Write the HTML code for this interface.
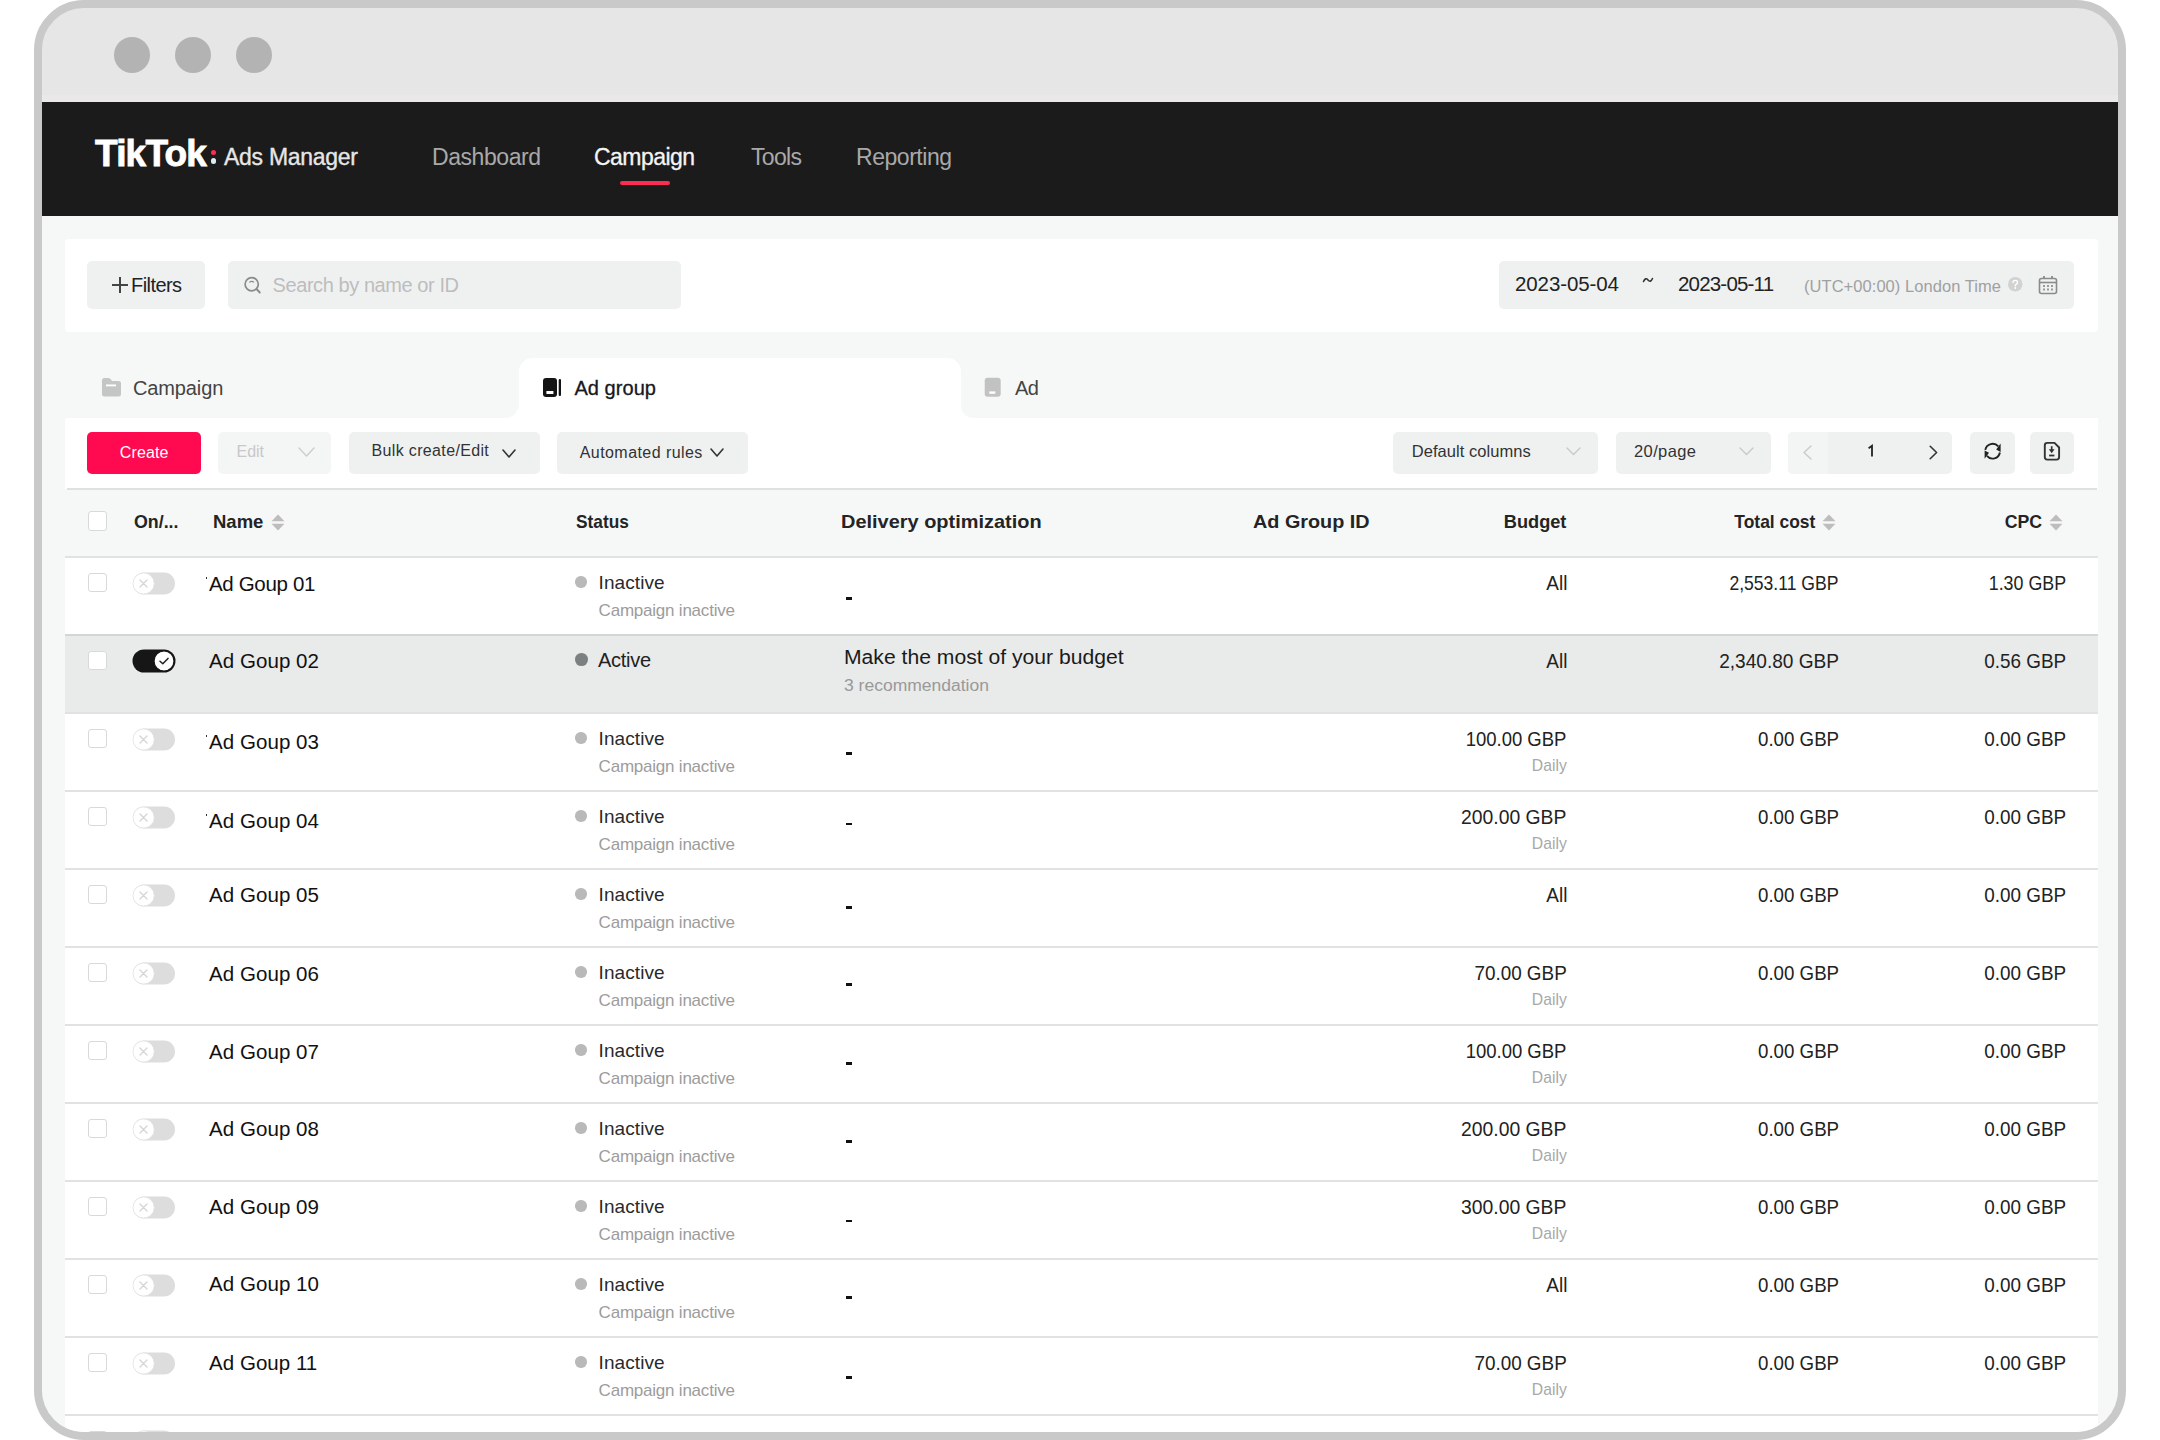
<!DOCTYPE html>
<html><head><meta charset="utf-8"><style>
html,body{margin:0;padding:0;}
body{width:2160px;height:1440px;overflow:hidden;background:#ffffff;position:relative;font-family:"Liberation Sans",sans-serif;}
#frame{position:absolute;left:34px;top:0px;width:2092px;height:1440px;box-sizing:border-box;border:8px solid #c9c9c9;border-radius:50px;background:#e6e6e6;}
#clip{position:absolute;left:42px;top:8px;width:2076px;height:1424px;overflow:hidden;border-radius:42px;}
#inner{position:absolute;left:-42px;top:-8px;width:2160px;height:1440px;}
.t{position:absolute;white-space:nowrap;line-height:1;}
.b{position:absolute;}
.s{position:absolute;overflow:visible;}
</style></head><body>
<div id="frame">
<div class="b" style="left:72px;top:29px;width:36px;height:36px;background:#b3b3b3;border-radius:50%;"></div>
<div class="b" style="left:133px;top:29px;width:36px;height:36px;background:#b3b3b3;border-radius:50%;"></div>
<div class="b" style="left:194px;top:29px;width:36px;height:36px;background:#b3b3b3;border-radius:50%;"></div>
</div>
<div id="clip"><div id="inner">
<div class="b" style="left:42px;top:95px;width:2077px;height:7px;background:#eae8e8;border-radius:0;"></div>
<div class="b" style="left:42px;top:102px;width:2077px;height:114px;background:#1c1b1b;border-radius:0;"></div>
<div class="b" style="left:42px;top:216px;width:2077px;height:1216px;background:#f6f8f8;border-radius:0;"></div>
<div class="t" style="left:95.0px;top:135.1px;font-size:37px;color:#ffffff;font-weight:700;letter-spacing:-0.80px;-webkit-text-stroke:0.9px #fff;">TikTok</div>
<div class="b" style="left:210.8px;top:149.8px;width:5.6px;height:5.6px;background:#fe2c55;border-radius:50%;"></div>
<div class="b" style="left:210.8px;top:158.2px;width:5.6px;height:5.6px;background:#d8eef0;border-radius:50%;"></div>
<div class="t" style="left:224.0px;top:145.9px;font-size:23px;color:#e6e6e6;font-weight:400;letter-spacing:-0.28px;-webkit-text-stroke:0.35px #e6e6e6;">Ads Manager</div>
<div class="t" style="left:432.0px;top:145.8px;font-size:23px;color:#a9a9a9;font-weight:400;letter-spacing:-0.43px;">Dashboard</div>
<div class="t" style="left:594.0px;top:145.8px;font-size:23px;color:#f4f4f4;font-weight:400;letter-spacing:-0.55px;-webkit-text-stroke:0.3px #f4f4f4;">Campaign</div>
<div class="b" style="left:620px;top:181px;width:50px;height:4px;background:#fe2c55;border-radius:2px;"></div>
<div class="t" style="left:751.0px;top:145.8px;font-size:23px;color:#a9a9a9;font-weight:400;letter-spacing:-0.68px;">Tools</div>
<div class="t" style="left:856.0px;top:145.8px;font-size:23px;color:#a9a9a9;font-weight:400;letter-spacing:-0.46px;">Reporting</div>
<div class="b" style="left:65px;top:239px;width:2033px;height:93px;background:#ffffff;border-radius:4px;"></div>
<div class="b" style="left:87px;top:261px;width:118px;height:48px;background:#eff1f1;border-radius:5px;"></div>
<div class="b" style="left:111.6px;top:283.7px;width:16.2px;height:2px;background:#444;border-radius:0;"></div>
<div class="b" style="left:118.9px;top:276.8px;width:2px;height:16px;background:#444;border-radius:0;"></div>
<div class="t" style="left:131.0px;top:275.3px;font-size:20px;color:#222222;font-weight:400;letter-spacing:-0.57px;">Filters</div>
<div class="b" style="left:228px;top:261px;width:453px;height:48px;background:#eff1f1;border-radius:5px;"></div>
<svg class="s" style="left:242px;top:274px" width="22" height="22" viewBox="0 0 22 22"><circle cx="9.7" cy="10.2" r="6.6" fill="none" stroke="#8a8a8a" stroke-width="1.7"/><path d="M7.3 8.4 Q9.7 6.4 12.1 8.4" fill="none" stroke="#8a8a8a" stroke-width="1.2"/><line x1="14.5" y1="15" x2="17.8" y2="18.5" stroke="#8a8a8a" stroke-width="1.9" stroke-linecap="round"/></svg>
<div class="t" style="left:272.6px;top:275.0px;font-size:20px;color:#bdbdbd;font-weight:400;letter-spacing:-0.43px;">Search by name or ID</div>
<div class="b" style="left:1499px;top:261px;width:575px;height:48px;background:#eff1f1;border-radius:5px;"></div>
<div class="t" style="left:1515.0px;top:274.2px;font-size:20.5px;color:#222222;font-weight:400;letter-spacing:-0.10px;">2023-05-04</div>
<svg class="s" style="left:1642px;top:275px" width="12" height="10" viewBox="0 0 12 10"><path d="M1.5 6.5 Q3.5 2 6 5 Q8.5 8 10.5 3.5" fill="none" stroke="#333" stroke-width="1.6" stroke-linecap="round"/></svg>
<div class="t" style="left:1678.0px;top:274.2px;font-size:20.5px;color:#222222;font-weight:400;letter-spacing:-0.81px;">2023-05-11</div>
<div class="t" style="left:1804.0px;top:277.6px;font-size:16.5px;color:#a0a0a0;font-weight:400;letter-spacing:0.05px;">(UTC+00:00) London Time</div>
<svg class="s" style="left:2008px;top:277.3px" width="14.5" height="14.5" viewBox="0 0 14.5 14.5"><circle cx="7.25" cy="7.25" r="7.25" fill="#d2d2d2"/><path d="M5 5.6 Q5 3.4 7.25 3.4 Q9.5 3.4 9.5 5.4 Q9.5 6.6 8.1 7.3 Q7.25 7.8 7.25 8.8" fill="none" stroke="#fff" stroke-width="1.4" stroke-linecap="round"/><circle cx="7.25" cy="11" r="0.9" fill="#fff"/></svg>
<svg class="s" style="left:2038px;top:275px" width="21" height="20" viewBox="0 0 21 20"><rect x="1.5" y="3.5" width="17" height="15" rx="2" fill="none" stroke="#8a8a8a" stroke-width="1.6"/><line x1="1.5" y1="7.5" x2="18.5" y2="7.5" stroke="#8a8a8a" stroke-width="1.6"/><line x1="6" y1="1" x2="6" y2="4" stroke="#8a8a8a" stroke-width="1.8"/><line x1="14" y1="1" x2="14" y2="4" stroke="#8a8a8a" stroke-width="1.8"/><g fill="#9a9a9a"><rect x="5" y="10" width="2" height="2"/><rect x="9" y="10" width="2" height="2"/><rect x="13" y="10" width="2" height="2"/><rect x="5" y="13.5" width="2" height="2"/><rect x="9" y="13.5" width="2" height="2"/><rect x="13" y="13.5" width="2" height="2"/></g></svg>
<div class="b" style="left:519px;top:358px;width:442px;height:70px;background:#ffffff;border-radius:14px 14px 0 0;"></div>
<div class="b" style="left:505px;top:404px;width:14px;height:14px;background:radial-gradient(circle at 0 0, #f6f8f8 13.5px, #ffffff 14.5px);border-radius:0;"></div>
<div class="b" style="left:961px;top:406px;width:12px;height:12px;background:radial-gradient(circle at 100% 0, #f6f8f8 11.5px, #ffffff 12.5px);border-radius:0;"></div>
<svg class="s" style="left:101px;top:377px" width="21" height="21" viewBox="0 0 21 21"><path d="M1 3.5 Q1 1 3.5 1 H7.5 Q9 1 10 2.5 L11 4 H17.5 Q20 4 20 6.5 V17 Q20 19.5 17.5 19.5 H3.5 Q1 19.5 1 17 Z" fill="#c4c6c6"/><rect x="5" y="7.5" width="10" height="1.8" fill="#fff"/></svg>
<div class="t" style="left:133.0px;top:378.4px;font-size:20px;color:#444444;font-weight:400;letter-spacing:-0.13px;">Campaign</div>
<svg class="s" style="left:542px;top:377px" width="21" height="21" viewBox="0 0 21 21"><rect x="1" y="1" width="14" height="19" rx="3" fill="#141414"/><rect x="4.4" y="14" width="7" height="3" fill="#fff"/><rect x="16.7" y="2" width="2.3" height="17" rx="1.1" fill="#141414"/></svg>
<div class="t" style="left:574.4px;top:378.4px;font-size:20px;color:#161823;font-weight:400;letter-spacing:0.06px;-webkit-text-stroke:0.3px #161823;">Ad group</div>
<svg class="s" style="left:984px;top:377px" width="18" height="21" viewBox="0 0 18 21"><rect x="0.7" y="0.8" width="16" height="19" rx="3" fill="#c2c2c2"/><rect x="5.3" y="14.4" width="6" height="2.4" fill="#fff"/></svg>
<div class="t" style="left:1015.0px;top:378.4px;font-size:20px;color:#444444;font-weight:400;letter-spacing:-0.50px;">Ad</div>
<div class="b" style="left:65px;top:418px;width:2033px;height:71px;background:#ffffff;border-radius:2px 0 0 0;"></div>
<div class="b" style="left:87px;top:431.5px;width:114px;height:42.5px;background:#ff0a50;border-radius:5px;"></div>
<div class="t" style="left:119.8px;top:444.8px;font-size:16px;color:#ffffff;font-weight:400;letter-spacing:0.12px;">Create</div>
<div class="b" style="left:218px;top:431.5px;width:113px;height:42px;background:#f4f5f5;border-radius:5px;"></div>
<div class="t" style="left:236.6px;top:443.9px;font-size:16px;color:#c8c8c8;font-weight:400;letter-spacing:-0.07px;">Edit</div>
<svg class="s" style="left:297px;top:446px" width="19" height="12" viewBox="0 0 19 12"><polyline points="2,2 9.5,10 17,2" fill="none" stroke="#cfcfcf" stroke-width="1.6" stroke-linecap="round" stroke-linejoin="round"/></svg>
<div class="b" style="left:348.5px;top:431.5px;width:191.5px;height:42px;background:#eff1f1;border-radius:5px;"></div>
<div class="t" style="left:371.5px;top:443.4px;font-size:16px;color:#333333;font-weight:400;letter-spacing:0.35px;">Bulk create/Edit</div>
<svg class="s" style="left:501px;top:448px" width="16" height="11" viewBox="0 0 16 11"><polyline points="2,2 8.0,9 14,2" fill="none" stroke="#333" stroke-width="1.6" stroke-linecap="round" stroke-linejoin="round"/></svg>
<div class="b" style="left:557px;top:431.5px;width:191px;height:42px;background:#eff1f1;border-radius:5px;"></div>
<div class="t" style="left:579.7px;top:444.9px;font-size:16px;color:#333333;font-weight:400;letter-spacing:0.44px;">Automated rules</div>
<svg class="s" style="left:709px;top:447px" width="16" height="11" viewBox="0 0 16 11"><polyline points="2,2 8.0,9 14,2" fill="none" stroke="#333" stroke-width="1.6" stroke-linecap="round" stroke-linejoin="round"/></svg>
<div class="b" style="left:1392.7px;top:431.5px;width:205.3px;height:42px;background:#eff1f1;border-radius:5px;"></div>
<div class="t" style="left:1411.7px;top:443.3px;font-size:16.5px;color:#333333;font-weight:400;letter-spacing:0.05px;">Default columns</div>
<svg class="s" style="left:1565px;top:446px" width="17" height="10.5" viewBox="0 0 17 10.5"><polyline points="2,2 8.5,8.5 15,2" fill="none" stroke="#c8c8c8" stroke-width="1.4" stroke-linecap="round" stroke-linejoin="round"/></svg>
<div class="b" style="left:1615.7px;top:431.5px;width:155px;height:42px;background:#eff1f1;border-radius:5px;"></div>
<div class="t" style="left:1634.0px;top:443.3px;font-size:16.5px;color:#333333;font-weight:400;letter-spacing:0.39px;">20/page</div>
<svg class="s" style="left:1738px;top:446px" width="17" height="10.5" viewBox="0 0 17 10.5"><polyline points="2,2 8.5,8.5 15,2" fill="none" stroke="#c8c8c8" stroke-width="1.4" stroke-linecap="round" stroke-linejoin="round"/></svg>
<div class="b" style="left:1788px;top:431.5px;width:164px;height:42px;background:#eff1f1;border-radius:5px;"></div>
<div class="b" style="left:1788px;top:431.5px;width:39.5px;height:42px;background:#f3f4f4;border-radius:5px 0 0 5px;"></div>
<svg class="s" style="left:1801px;top:444px" width="13" height="17" viewBox="0 0 13 17"><polyline points="10,2 3,8.5 10,15" fill="none" stroke="#cccccc" stroke-width="1.6" stroke-linecap="round" stroke-linejoin="round"/></svg>
<svg class="s" style="left:1866px;top:444px" width="10" height="15" viewBox="0 0 10 15"><path d="M2.6 4.2 L6 1.8 V12.5" fill="none" stroke="#222" stroke-width="1.8" stroke-linejoin="miter"/></svg>
<svg class="s" style="left:1927px;top:444px" width="13" height="17" viewBox="0 0 13 17"><polyline points="3.2,2.3 9.6,8.5 3.2,14.7" fill="none" stroke="#333" stroke-width="1.6" stroke-linecap="round" stroke-linejoin="round"/></svg>
<div class="b" style="left:1970.4px;top:431.5px;width:44.6px;height:42px;background:#eff1f1;border-radius:5px;"></div>
<svg class="s" style="left:1975px;top:435px" width="95" height="35" viewBox="0 0 95 35"><path d="M10.31 14.92 A7.4 7.4 0 0 1 23.27 11.44" fill="none" stroke="#222" stroke-width="1.9"/><polygon points="25.6,8.6 25.6,16.9 21.2,14.6" fill="#222"/><path d="M24.89 17.48 A7.4 7.4 0 0 1 11.93 20.96" fill="none" stroke="#222" stroke-width="1.9"/><polygon points="9.6,23.8 9.6,15.5 14,17.8" fill="#222"/></svg>
<div class="b" style="left:2030px;top:431.5px;width:44.3px;height:42px;background:#eff1f1;border-radius:5px;"></div>
<svg class="s" style="left:1975px;top:435px" width="95" height="35" viewBox="0 0 95 35"><path d="M72.3 7.9 H79.5 L84.1 12.5 V22.1 Q84.1 24.6 81.6 24.6 H72.3 Q69.8 24.6 69.8 22.1 V10.4 Q69.8 7.9 72.3 7.9 Z" fill="none" stroke="#333" stroke-width="1.9"/><line x1="76.7" y1="11.2" x2="76.7" y2="15.5" stroke="#333" stroke-width="1.7"/><polygon points="73.8,14.2 79.6,14.2 76.7,18.2" fill="#333"/><rect x="74.1" y="19.6" width="5.3" height="1.8" fill="#333"/></svg>
<div class="b" style="left:67px;top:488px;width:2030px;height:1.5px;background:#dfe1e1;border-radius:0;"></div>
<div class="b" style="left:87.5px;top:511.3px;width:19px;height:19.5px;background:#fff;border-radius:3px;border:1.5px solid #d9d9d9;box-sizing:border-box;"></div>
<div class="t" style="left:133.5px;top:512.4px;font-size:19px;color:#242424;font-weight:700;letter-spacing:0.00px;transform:scaleX(0.9368);transform-origin:0 0;">On/...</div>
<div class="t" style="left:212.6px;top:512.4px;font-size:19px;color:#242424;font-weight:700;letter-spacing:0.00px;transform:scaleX(0.9734);transform-origin:0 0;">Name</div>
<svg class="s" style="left:271px;top:514px" width="14" height="17" viewBox="0 0 14 17"><polygon points="7,0.5 13.5,7.2 0.5,7.2" fill="#bdbdbd"/><polygon points="0.5,9.8 13.5,9.8 7,16.5" fill="#bdbdbd"/></svg>
<div class="t" style="left:575.5px;top:512.4px;font-size:19px;color:#242424;font-weight:700;letter-spacing:0.00px;transform:scaleX(0.9096);transform-origin:0 0;">Status</div>
<div class="t" style="left:841.3px;top:512.4px;font-size:19px;color:#242424;font-weight:700;letter-spacing:0.00px;transform:scaleX(1.0500);transform-origin:0 0;">Delivery optimization</div>
<div class="t" style="left:1253.0px;top:512.4px;font-size:19px;color:#242424;font-weight:700;letter-spacing:0.00px;transform:scaleX(1.0419);transform-origin:0 0;">Ad Group ID</div>
<div class="t" style="left:1501.0px;top:512.4px;font-size:19px;color:#242424;font-weight:700;letter-spacing:0.00px;transform:scaleX(0.9579);transform-origin:100% 0;">Budget</div>
<div class="t" style="left:1726.7px;top:512.4px;font-size:19px;color:#242424;font-weight:700;letter-spacing:0.00px;transform:scaleX(0.9168);transform-origin:100% 0;">Total cost</div>
<svg class="s" style="left:1822px;top:514px" width="14" height="17" viewBox="0 0 14 17"><polygon points="7,0.5 13.5,7.2 0.5,7.2" fill="#bdbdbd"/><polygon points="0.5,9.8 13.5,9.8 7,16.5" fill="#bdbdbd"/></svg>
<div class="t" style="left:2001.9px;top:512.4px;font-size:19px;color:#242424;font-weight:700;letter-spacing:0.00px;transform:scaleX(0.9329);transform-origin:100% 0;">CPC</div>
<svg class="s" style="left:2049px;top:514px" width="14" height="17" viewBox="0 0 14 17"><polygon points="7,0.5 13.5,7.2 0.5,7.2" fill="#bdbdbd"/><polygon points="0.5,9.8 13.5,9.8 7,16.5" fill="#bdbdbd"/></svg>
<div class="b" style="left:65px;top:557px;width:2033px;height:78px;background:#ffffff;border-radius:0;"></div>
<div class="b" style="left:65px;top:556px;width:2033px;height:2px;background:#e1e3e3;border-radius:0;"></div>
<div class="b" style="left:88px;top:572.5px;width:19px;height:19.5px;background:#fff;border-radius:3px;border:1.5px solid #d9d9d9;box-sizing:border-box;"></div>
<svg class="s" style="left:132px;top:572px" width="44" height="23" viewBox="0 0 44 23"><rect x="1" y="0.5" width="42" height="22" rx="11" fill="#dddddd"/><circle cx="11.6" cy="11.5" r="10.6" fill="#fff" stroke="#e2e2e2" stroke-width="0.8"/><path d="M8 8 L15 15 M15 8 L8 15" stroke="#d4d4d4" stroke-width="1.3" stroke-linecap="round"/></svg>
<div class="t" style="left:209.0px;top:574.2px;font-size:20.5px;color:#111111;font-weight:400;letter-spacing:-0.34px;">Ad Goup 01</div>
<div class="b" style="left:205.5px;top:577.1px;width:1.6px;height:2.2px;background:#333;border-radius:0;"></div>
<div class="b" style="left:575.3px;top:576.3px;width:11.4px;height:11.4px;background:#b9b9b9;border-radius:50%;"></div>
<div class="t" style="left:598.6px;top:573.1px;font-size:19px;color:#2a2a2a;font-weight:400;letter-spacing:0.08px;">Inactive</div>
<div class="t" style="left:598.6px;top:601.8px;font-size:17px;color:#9c9c9c;font-weight:400;letter-spacing:-0.22px;">Campaign inactive</div>
<div class="b" style="left:845.5px;top:597px;width:6.2px;height:2.5px;background:#111;border-radius:0;"></div>
<div class="t" style="left:1543.5px;top:571.6px;font-size:21px;color:#222222;font-weight:400;letter-spacing:0.00px;transform:scaleX(0.9009);transform-origin:100% 0;">All</div>
<div class="t" style="left:1708.3px;top:571.6px;font-size:21px;color:#222222;font-weight:400;letter-spacing:0.00px;transform:scaleX(0.8358);transform-origin:100% 0;">2,553.11 GBP</div>
<div class="t" style="left:1975.3px;top:571.6px;font-size:21px;color:#222222;font-weight:400;letter-spacing:0.00px;transform:scaleX(0.8491);transform-origin:100% 0;">1.30 GBP</div>
<div class="b" style="left:65px;top:635px;width:2033px;height:78px;background:#e9eaea;border-radius:0;"></div>
<div class="b" style="left:65px;top:634px;width:2033px;height:2px;background:#d4d6d6;border-radius:0;"></div>
<div class="b" style="left:88px;top:650.5px;width:19px;height:19.5px;background:#fff;border-radius:3px;border:1.5px solid #d9d9d9;box-sizing:border-box;"></div>
<svg class="s" style="left:132px;top:649px" width="44" height="24" viewBox="0 0 44 24"><rect x="0.5" y="0.5" width="43" height="23" rx="11.5" fill="#161616"/><circle cx="32" cy="12" r="10" fill="#fff" stroke="#161616" stroke-width="1.2"/><polyline points="28,12.2 30.8,14.8 36,9.4" fill="none" stroke="#222" stroke-width="1.5" stroke-linecap="round" stroke-linejoin="round"/></svg>
<div class="t" style="left:209.0px;top:651.1px;font-size:20.5px;color:#111111;font-weight:400;letter-spacing:0.06px;">Ad Goup 02</div>
<div class="b" style="left:575px;top:653px;width:12.8px;height:12.8px;background:#7d8080;border-radius:50%;"></div>
<div class="t" style="left:597.9px;top:650.0px;font-size:20px;color:#222222;font-weight:400;letter-spacing:-0.26px;">Active</div>
<div class="t" style="left:844.0px;top:647.7px;font-size:19.5px;color:#1a1a1a;font-weight:400;letter-spacing:0.00px;transform:scaleX(1.0838);transform-origin:0 0;">Make the most of your budget</div>
<div class="t" style="left:844.0px;top:678.1px;font-size:16px;color:#999999;font-weight:400;letter-spacing:0.00px;transform:scaleX(1.0938);transform-origin:0 0;">3 recommendation</div>
<div class="t" style="left:1543.5px;top:649.6px;font-size:21px;color:#222222;font-weight:400;letter-spacing:0.00px;transform:scaleX(0.9009);transform-origin:100% 0;">All</div>
<div class="t" style="left:1706.8px;top:649.6px;font-size:21px;color:#222222;font-weight:400;letter-spacing:0.00px;transform:scaleX(0.9076);transform-origin:100% 0;">2,340.80 GBP</div>
<div class="t" style="left:1975.3px;top:649.6px;font-size:21px;color:#222222;font-weight:400;letter-spacing:0.00px;transform:scaleX(0.8986);transform-origin:100% 0;">0.56 GBP</div>
<div class="b" style="left:65px;top:713px;width:2033px;height:78px;background:#ffffff;border-radius:0;"></div>
<div class="b" style="left:65px;top:712px;width:2033px;height:2px;background:#e1e3e3;border-radius:0;"></div>
<div class="b" style="left:88px;top:728.5px;width:19px;height:19.5px;background:#fff;border-radius:3px;border:1.5px solid #d9d9d9;box-sizing:border-box;"></div>
<svg class="s" style="left:132px;top:728px" width="44" height="23" viewBox="0 0 44 23"><rect x="1" y="0.5" width="42" height="22" rx="11" fill="#dddddd"/><circle cx="11.6" cy="11.5" r="10.6" fill="#fff" stroke="#e2e2e2" stroke-width="0.8"/><path d="M8 8 L15 15 M15 8 L8 15" stroke="#d4d4d4" stroke-width="1.3" stroke-linecap="round"/></svg>
<div class="t" style="left:209.0px;top:731.6px;font-size:20.5px;color:#111111;font-weight:400;letter-spacing:0.06px;">Ad Goup 03</div>
<div class="b" style="left:205.5px;top:734.5px;width:1.6px;height:2.2px;background:#333;border-radius:0;"></div>
<div class="b" style="left:575.3px;top:732.3px;width:11.4px;height:11.4px;background:#b9b9b9;border-radius:50%;"></div>
<div class="t" style="left:598.6px;top:729.1px;font-size:19px;color:#2a2a2a;font-weight:400;letter-spacing:0.08px;">Inactive</div>
<div class="t" style="left:598.6px;top:757.8px;font-size:17px;color:#9c9c9c;font-weight:400;letter-spacing:-0.22px;">Campaign inactive</div>
<div class="b" style="left:845.5px;top:752px;width:6.2px;height:2.5px;background:#111;border-radius:0;"></div>
<div class="t" style="left:1452.4px;top:727.6px;font-size:21px;color:#222222;font-weight:400;letter-spacing:0.00px;transform:scaleX(0.8807);transform-origin:100% 0;">100.00 GBP</div>
<div class="t" style="left:1529.0px;top:757.2px;font-size:17px;color:#a8a8a8;font-weight:400;letter-spacing:0.00px;transform:scaleX(0.9253);transform-origin:100% 0;">Daily</div>
<div class="t" style="left:1747.7px;top:727.6px;font-size:21px;color:#222222;font-weight:400;letter-spacing:0.00px;transform:scaleX(0.8898);transform-origin:100% 0;">0.00 GBP</div>
<div class="t" style="left:1975.3px;top:727.6px;font-size:21px;color:#222222;font-weight:400;letter-spacing:0.00px;transform:scaleX(0.8986);transform-origin:100% 0;">0.00 GBP</div>
<div class="b" style="left:65px;top:791px;width:2033px;height:78px;background:#ffffff;border-radius:0;"></div>
<div class="b" style="left:65px;top:790px;width:2033px;height:2px;background:#e1e3e3;border-radius:0;"></div>
<div class="b" style="left:88px;top:806.5px;width:19px;height:19.5px;background:#fff;border-radius:3px;border:1.5px solid #d9d9d9;box-sizing:border-box;"></div>
<svg class="s" style="left:132px;top:806px" width="44" height="23" viewBox="0 0 44 23"><rect x="1" y="0.5" width="42" height="22" rx="11" fill="#dddddd"/><circle cx="11.6" cy="11.5" r="10.6" fill="#fff" stroke="#e2e2e2" stroke-width="0.8"/><path d="M8 8 L15 15 M15 8 L8 15" stroke="#d4d4d4" stroke-width="1.3" stroke-linecap="round"/></svg>
<div class="t" style="left:209.0px;top:810.9px;font-size:20.5px;color:#111111;font-weight:400;letter-spacing:0.06px;">Ad Goup 04</div>
<div class="b" style="left:205.5px;top:813.8px;width:1.6px;height:2.2px;background:#333;border-radius:0;"></div>
<div class="b" style="left:575.3px;top:810.3px;width:11.4px;height:11.4px;background:#b9b9b9;border-radius:50%;"></div>
<div class="t" style="left:598.6px;top:807.1px;font-size:19px;color:#2a2a2a;font-weight:400;letter-spacing:0.08px;">Inactive</div>
<div class="t" style="left:598.6px;top:835.8px;font-size:17px;color:#9c9c9c;font-weight:400;letter-spacing:-0.22px;">Campaign inactive</div>
<div class="b" style="left:845.5px;top:822.6px;width:6.2px;height:2.5px;background:#111;border-radius:0;"></div>
<div class="t" style="left:1452.4px;top:805.6px;font-size:21px;color:#222222;font-weight:400;letter-spacing:0.00px;transform:scaleX(0.9209);transform-origin:100% 0;">200.00 GBP</div>
<div class="t" style="left:1529.0px;top:835.2px;font-size:17px;color:#a8a8a8;font-weight:400;letter-spacing:0.00px;transform:scaleX(0.9253);transform-origin:100% 0;">Daily</div>
<div class="t" style="left:1747.7px;top:805.6px;font-size:21px;color:#222222;font-weight:400;letter-spacing:0.00px;transform:scaleX(0.8898);transform-origin:100% 0;">0.00 GBP</div>
<div class="t" style="left:1975.3px;top:805.6px;font-size:21px;color:#222222;font-weight:400;letter-spacing:0.00px;transform:scaleX(0.8986);transform-origin:100% 0;">0.00 GBP</div>
<div class="b" style="left:65px;top:869px;width:2033px;height:78px;background:#ffffff;border-radius:0;"></div>
<div class="b" style="left:65px;top:868px;width:2033px;height:2px;background:#e1e3e3;border-radius:0;"></div>
<div class="b" style="left:88px;top:884.5px;width:19px;height:19.5px;background:#fff;border-radius:3px;border:1.5px solid #d9d9d9;box-sizing:border-box;"></div>
<svg class="s" style="left:132px;top:884px" width="44" height="23" viewBox="0 0 44 23"><rect x="1" y="0.5" width="42" height="22" rx="11" fill="#dddddd"/><circle cx="11.6" cy="11.5" r="10.6" fill="#fff" stroke="#e2e2e2" stroke-width="0.8"/><path d="M8 8 L15 15 M15 8 L8 15" stroke="#d4d4d4" stroke-width="1.3" stroke-linecap="round"/></svg>
<div class="t" style="left:209.0px;top:885.1px;font-size:20.5px;color:#111111;font-weight:400;letter-spacing:0.06px;">Ad Goup 05</div>
<div class="b" style="left:575.3px;top:888.3px;width:11.4px;height:11.4px;background:#b9b9b9;border-radius:50%;"></div>
<div class="t" style="left:598.6px;top:885.1px;font-size:19px;color:#2a2a2a;font-weight:400;letter-spacing:0.08px;">Inactive</div>
<div class="t" style="left:598.6px;top:913.8px;font-size:17px;color:#9c9c9c;font-weight:400;letter-spacing:-0.22px;">Campaign inactive</div>
<div class="b" style="left:845.5px;top:906px;width:6.2px;height:2.5px;background:#111;border-radius:0;"></div>
<div class="t" style="left:1543.5px;top:883.6px;font-size:21px;color:#222222;font-weight:400;letter-spacing:0.00px;transform:scaleX(0.9009);transform-origin:100% 0;">All</div>
<div class="t" style="left:1747.7px;top:883.6px;font-size:21px;color:#222222;font-weight:400;letter-spacing:0.00px;transform:scaleX(0.8898);transform-origin:100% 0;">0.00 GBP</div>
<div class="t" style="left:1975.3px;top:883.6px;font-size:21px;color:#222222;font-weight:400;letter-spacing:0.00px;transform:scaleX(0.8986);transform-origin:100% 0;">0.00 GBP</div>
<div class="b" style="left:65px;top:947px;width:2033px;height:78px;background:#ffffff;border-radius:0;"></div>
<div class="b" style="left:65px;top:946px;width:2033px;height:2px;background:#e1e3e3;border-radius:0;"></div>
<div class="b" style="left:88px;top:962.5px;width:19px;height:19.5px;background:#fff;border-radius:3px;border:1.5px solid #d9d9d9;box-sizing:border-box;"></div>
<svg class="s" style="left:132px;top:962px" width="44" height="23" viewBox="0 0 44 23"><rect x="1" y="0.5" width="42" height="22" rx="11" fill="#dddddd"/><circle cx="11.6" cy="11.5" r="10.6" fill="#fff" stroke="#e2e2e2" stroke-width="0.8"/><path d="M8 8 L15 15 M15 8 L8 15" stroke="#d4d4d4" stroke-width="1.3" stroke-linecap="round"/></svg>
<div class="t" style="left:209.0px;top:963.6px;font-size:20.5px;color:#111111;font-weight:400;letter-spacing:0.06px;">Ad Goup 06</div>
<div class="b" style="left:575.3px;top:966.3px;width:11.4px;height:11.4px;background:#b9b9b9;border-radius:50%;"></div>
<div class="t" style="left:598.6px;top:963.1px;font-size:19px;color:#2a2a2a;font-weight:400;letter-spacing:0.08px;">Inactive</div>
<div class="t" style="left:598.6px;top:991.8px;font-size:17px;color:#9c9c9c;font-weight:400;letter-spacing:-0.22px;">Campaign inactive</div>
<div class="b" style="left:845.5px;top:983px;width:6.2px;height:2.5px;background:#111;border-radius:0;"></div>
<div class="t" style="left:1464.1px;top:961.6px;font-size:21px;color:#222222;font-weight:400;letter-spacing:0.00px;transform:scaleX(0.8988);transform-origin:100% 0;">70.00 GBP</div>
<div class="t" style="left:1529.0px;top:991.2px;font-size:17px;color:#a8a8a8;font-weight:400;letter-spacing:0.00px;transform:scaleX(0.9253);transform-origin:100% 0;">Daily</div>
<div class="t" style="left:1747.7px;top:961.6px;font-size:21px;color:#222222;font-weight:400;letter-spacing:0.00px;transform:scaleX(0.8898);transform-origin:100% 0;">0.00 GBP</div>
<div class="t" style="left:1975.3px;top:961.6px;font-size:21px;color:#222222;font-weight:400;letter-spacing:0.00px;transform:scaleX(0.8986);transform-origin:100% 0;">0.00 GBP</div>
<div class="b" style="left:65px;top:1025px;width:2033px;height:78px;background:#ffffff;border-radius:0;"></div>
<div class="b" style="left:65px;top:1024px;width:2033px;height:2px;background:#e1e3e3;border-radius:0;"></div>
<div class="b" style="left:88px;top:1040.5px;width:19px;height:19.5px;background:#fff;border-radius:3px;border:1.5px solid #d9d9d9;box-sizing:border-box;"></div>
<svg class="s" style="left:132px;top:1040px" width="44" height="23" viewBox="0 0 44 23"><rect x="1" y="0.5" width="42" height="22" rx="11" fill="#dddddd"/><circle cx="11.6" cy="11.5" r="10.6" fill="#fff" stroke="#e2e2e2" stroke-width="0.8"/><path d="M8 8 L15 15 M15 8 L8 15" stroke="#d4d4d4" stroke-width="1.3" stroke-linecap="round"/></svg>
<div class="t" style="left:209.0px;top:1042.2px;font-size:20.5px;color:#111111;font-weight:400;letter-spacing:0.06px;">Ad Goup 07</div>
<div class="b" style="left:575.3px;top:1044.3px;width:11.4px;height:11.4px;background:#b9b9b9;border-radius:50%;"></div>
<div class="t" style="left:598.6px;top:1041.1px;font-size:19px;color:#2a2a2a;font-weight:400;letter-spacing:0.08px;">Inactive</div>
<div class="t" style="left:598.6px;top:1069.8px;font-size:17px;color:#9c9c9c;font-weight:400;letter-spacing:-0.22px;">Campaign inactive</div>
<div class="b" style="left:845.5px;top:1062px;width:6.2px;height:2.5px;background:#111;border-radius:0;"></div>
<div class="t" style="left:1452.4px;top:1039.7px;font-size:21px;color:#222222;font-weight:400;letter-spacing:0.00px;transform:scaleX(0.8807);transform-origin:100% 0;">100.00 GBP</div>
<div class="t" style="left:1529.0px;top:1069.2px;font-size:17px;color:#a8a8a8;font-weight:400;letter-spacing:0.00px;transform:scaleX(0.9253);transform-origin:100% 0;">Daily</div>
<div class="t" style="left:1747.7px;top:1039.7px;font-size:21px;color:#222222;font-weight:400;letter-spacing:0.00px;transform:scaleX(0.8898);transform-origin:100% 0;">0.00 GBP</div>
<div class="t" style="left:1975.3px;top:1039.7px;font-size:21px;color:#222222;font-weight:400;letter-spacing:0.00px;transform:scaleX(0.8986);transform-origin:100% 0;">0.00 GBP</div>
<div class="b" style="left:65px;top:1103px;width:2033px;height:78px;background:#ffffff;border-radius:0;"></div>
<div class="b" style="left:65px;top:1102px;width:2033px;height:2px;background:#e1e3e3;border-radius:0;"></div>
<div class="b" style="left:88px;top:1118.5px;width:19px;height:19.5px;background:#fff;border-radius:3px;border:1.5px solid #d9d9d9;box-sizing:border-box;"></div>
<svg class="s" style="left:132px;top:1118px" width="44" height="23" viewBox="0 0 44 23"><rect x="1" y="0.5" width="42" height="22" rx="11" fill="#dddddd"/><circle cx="11.6" cy="11.5" r="10.6" fill="#fff" stroke="#e2e2e2" stroke-width="0.8"/><path d="M8 8 L15 15 M15 8 L8 15" stroke="#d4d4d4" stroke-width="1.3" stroke-linecap="round"/></svg>
<div class="t" style="left:209.0px;top:1119.3px;font-size:20.5px;color:#111111;font-weight:400;letter-spacing:0.06px;">Ad Goup 08</div>
<div class="b" style="left:575.3px;top:1122.3px;width:11.4px;height:11.4px;background:#b9b9b9;border-radius:50%;"></div>
<div class="t" style="left:598.6px;top:1119.1px;font-size:19px;color:#2a2a2a;font-weight:400;letter-spacing:0.08px;">Inactive</div>
<div class="t" style="left:598.6px;top:1147.8px;font-size:17px;color:#9c9c9c;font-weight:400;letter-spacing:-0.22px;">Campaign inactive</div>
<div class="b" style="left:845.5px;top:1140px;width:6.2px;height:2.5px;background:#111;border-radius:0;"></div>
<div class="t" style="left:1452.4px;top:1117.7px;font-size:21px;color:#222222;font-weight:400;letter-spacing:0.00px;transform:scaleX(0.9209);transform-origin:100% 0;">200.00 GBP</div>
<div class="t" style="left:1529.0px;top:1147.2px;font-size:17px;color:#a8a8a8;font-weight:400;letter-spacing:0.00px;transform:scaleX(0.9253);transform-origin:100% 0;">Daily</div>
<div class="t" style="left:1747.7px;top:1117.7px;font-size:21px;color:#222222;font-weight:400;letter-spacing:0.00px;transform:scaleX(0.8898);transform-origin:100% 0;">0.00 GBP</div>
<div class="t" style="left:1975.3px;top:1117.7px;font-size:21px;color:#222222;font-weight:400;letter-spacing:0.00px;transform:scaleX(0.8986);transform-origin:100% 0;">0.00 GBP</div>
<div class="b" style="left:65px;top:1181px;width:2033px;height:78px;background:#ffffff;border-radius:0;"></div>
<div class="b" style="left:65px;top:1180px;width:2033px;height:2px;background:#e1e3e3;border-radius:0;"></div>
<div class="b" style="left:88px;top:1196.5px;width:19px;height:19.5px;background:#fff;border-radius:3px;border:1.5px solid #d9d9d9;box-sizing:border-box;"></div>
<svg class="s" style="left:132px;top:1196px" width="44" height="23" viewBox="0 0 44 23"><rect x="1" y="0.5" width="42" height="22" rx="11" fill="#dddddd"/><circle cx="11.6" cy="11.5" r="10.6" fill="#fff" stroke="#e2e2e2" stroke-width="0.8"/><path d="M8 8 L15 15 M15 8 L8 15" stroke="#d4d4d4" stroke-width="1.3" stroke-linecap="round"/></svg>
<div class="t" style="left:209.0px;top:1197.2px;font-size:20.5px;color:#111111;font-weight:400;letter-spacing:0.06px;">Ad Goup 09</div>
<div class="b" style="left:575.3px;top:1200.3px;width:11.4px;height:11.4px;background:#b9b9b9;border-radius:50%;"></div>
<div class="t" style="left:598.6px;top:1197.1px;font-size:19px;color:#2a2a2a;font-weight:400;letter-spacing:0.08px;">Inactive</div>
<div class="t" style="left:598.6px;top:1225.8px;font-size:17px;color:#9c9c9c;font-weight:400;letter-spacing:-0.22px;">Campaign inactive</div>
<div class="b" style="left:845.5px;top:1219.6px;width:6.2px;height:2.5px;background:#111;border-radius:0;"></div>
<div class="t" style="left:1452.4px;top:1195.7px;font-size:21px;color:#222222;font-weight:400;letter-spacing:0.00px;transform:scaleX(0.9209);transform-origin:100% 0;">300.00 GBP</div>
<div class="t" style="left:1529.0px;top:1225.2px;font-size:17px;color:#a8a8a8;font-weight:400;letter-spacing:0.00px;transform:scaleX(0.9253);transform-origin:100% 0;">Daily</div>
<div class="t" style="left:1747.7px;top:1195.7px;font-size:21px;color:#222222;font-weight:400;letter-spacing:0.00px;transform:scaleX(0.8898);transform-origin:100% 0;">0.00 GBP</div>
<div class="t" style="left:1975.3px;top:1195.7px;font-size:21px;color:#222222;font-weight:400;letter-spacing:0.00px;transform:scaleX(0.8986);transform-origin:100% 0;">0.00 GBP</div>
<div class="b" style="left:65px;top:1259px;width:2033px;height:78px;background:#ffffff;border-radius:0;"></div>
<div class="b" style="left:65px;top:1258px;width:2033px;height:2px;background:#e1e3e3;border-radius:0;"></div>
<div class="b" style="left:88px;top:1274.5px;width:19px;height:19.5px;background:#fff;border-radius:3px;border:1.5px solid #d9d9d9;box-sizing:border-box;"></div>
<svg class="s" style="left:132px;top:1274px" width="44" height="23" viewBox="0 0 44 23"><rect x="1" y="0.5" width="42" height="22" rx="11" fill="#dddddd"/><circle cx="11.6" cy="11.5" r="10.6" fill="#fff" stroke="#e2e2e2" stroke-width="0.8"/><path d="M8 8 L15 15 M15 8 L8 15" stroke="#d4d4d4" stroke-width="1.3" stroke-linecap="round"/></svg>
<div class="t" style="left:209.0px;top:1273.7px;font-size:20.5px;color:#111111;font-weight:400;letter-spacing:0.06px;">Ad Goup 10</div>
<div class="b" style="left:575.3px;top:1278.3px;width:11.4px;height:11.4px;background:#b9b9b9;border-radius:50%;"></div>
<div class="t" style="left:598.6px;top:1275.1px;font-size:19px;color:#2a2a2a;font-weight:400;letter-spacing:0.08px;">Inactive</div>
<div class="t" style="left:598.6px;top:1303.8px;font-size:17px;color:#9c9c9c;font-weight:400;letter-spacing:-0.22px;">Campaign inactive</div>
<div class="b" style="left:845.5px;top:1296.3px;width:6.2px;height:2.5px;background:#111;border-radius:0;"></div>
<div class="t" style="left:1543.5px;top:1273.7px;font-size:21px;color:#222222;font-weight:400;letter-spacing:0.00px;transform:scaleX(0.9009);transform-origin:100% 0;">All</div>
<div class="t" style="left:1747.7px;top:1273.7px;font-size:21px;color:#222222;font-weight:400;letter-spacing:0.00px;transform:scaleX(0.8898);transform-origin:100% 0;">0.00 GBP</div>
<div class="t" style="left:1975.3px;top:1273.7px;font-size:21px;color:#222222;font-weight:400;letter-spacing:0.00px;transform:scaleX(0.8986);transform-origin:100% 0;">0.00 GBP</div>
<div class="b" style="left:65px;top:1337px;width:2033px;height:78px;background:#ffffff;border-radius:0;"></div>
<div class="b" style="left:65px;top:1336px;width:2033px;height:2px;background:#e1e3e3;border-radius:0;"></div>
<div class="b" style="left:88px;top:1352.5px;width:19px;height:19.5px;background:#fff;border-radius:3px;border:1.5px solid #d9d9d9;box-sizing:border-box;"></div>
<svg class="s" style="left:132px;top:1352px" width="44" height="23" viewBox="0 0 44 23"><rect x="1" y="0.5" width="42" height="22" rx="11" fill="#dddddd"/><circle cx="11.6" cy="11.5" r="10.6" fill="#fff" stroke="#e2e2e2" stroke-width="0.8"/><path d="M8 8 L15 15 M15 8 L8 15" stroke="#d4d4d4" stroke-width="1.3" stroke-linecap="round"/></svg>
<div class="t" style="left:209.0px;top:1353.3px;font-size:20.5px;color:#111111;font-weight:400;letter-spacing:0.04px;">Ad Goup 11</div>
<div class="b" style="left:575.3px;top:1356.3px;width:11.4px;height:11.4px;background:#b9b9b9;border-radius:50%;"></div>
<div class="t" style="left:598.6px;top:1353.1px;font-size:19px;color:#2a2a2a;font-weight:400;letter-spacing:0.08px;">Inactive</div>
<div class="t" style="left:598.6px;top:1381.8px;font-size:17px;color:#9c9c9c;font-weight:400;letter-spacing:-0.22px;">Campaign inactive</div>
<div class="b" style="left:845.5px;top:1376px;width:6.2px;height:2.5px;background:#111;border-radius:0;"></div>
<div class="t" style="left:1464.1px;top:1351.7px;font-size:21px;color:#222222;font-weight:400;letter-spacing:0.00px;transform:scaleX(0.8988);transform-origin:100% 0;">70.00 GBP</div>
<div class="t" style="left:1529.0px;top:1381.2px;font-size:17px;color:#a8a8a8;font-weight:400;letter-spacing:0.00px;transform:scaleX(0.9253);transform-origin:100% 0;">Daily</div>
<div class="t" style="left:1747.7px;top:1351.7px;font-size:21px;color:#222222;font-weight:400;letter-spacing:0.00px;transform:scaleX(0.8898);transform-origin:100% 0;">0.00 GBP</div>
<div class="t" style="left:1975.3px;top:1351.7px;font-size:21px;color:#222222;font-weight:400;letter-spacing:0.00px;transform:scaleX(0.8986);transform-origin:100% 0;">0.00 GBP</div>
<div class="b" style="left:65px;top:1415px;width:2033px;height:78px;background:#ffffff;border-radius:0;"></div>
<div class="b" style="left:65px;top:1414px;width:2033px;height:2px;background:#e1e3e3;border-radius:0;"></div>
<div class="b" style="left:88px;top:1430.5px;width:19px;height:19.5px;background:#fff;border-radius:3px;border:1.5px solid #d9d9d9;box-sizing:border-box;"></div>
<svg class="s" style="left:132px;top:1430px" width="44" height="23" viewBox="0 0 44 23"><rect x="1" y="0.5" width="42" height="22" rx="11" fill="#dddddd"/><circle cx="11.6" cy="11.5" r="10.6" fill="#fff" stroke="#e2e2e2" stroke-width="0.8"/><path d="M8 8 L15 15 M15 8 L8 15" stroke="#d4d4d4" stroke-width="1.3" stroke-linecap="round"/></svg>
<div class="t" style="left:209.0px;top:1431.6px;font-size:20.5px;color:#111111;font-weight:400;letter-spacing:0.06px;">Ad Goup 12</div>
<div class="b" style="left:575.3px;top:1434.3px;width:11.4px;height:11.4px;background:#b9b9b9;border-radius:50%;"></div>
<div class="t" style="left:598.6px;top:1431.1px;font-size:19px;color:#2a2a2a;font-weight:400;letter-spacing:0.08px;">Inactive</div>
<div class="t" style="left:598.6px;top:1459.8px;font-size:17px;color:#9c9c9c;font-weight:400;letter-spacing:-0.22px;">Campaign inactive</div>
<div class="b" style="left:845.5px;top:1452px;width:6.2px;height:2.5px;background:#111;border-radius:0;"></div>
<div class="t" style="left:1452.4px;top:1429.7px;font-size:21px;color:#222222;font-weight:400;letter-spacing:0.00px;transform:scaleX(0.8807);transform-origin:100% 0;">100.00 GBP</div>
<div class="t" style="left:1529.0px;top:1459.2px;font-size:17px;color:#a8a8a8;font-weight:400;letter-spacing:0.00px;transform:scaleX(0.9253);transform-origin:100% 0;">Daily</div>
<div class="t" style="left:1747.7px;top:1429.7px;font-size:21px;color:#222222;font-weight:400;letter-spacing:0.00px;transform:scaleX(0.8898);transform-origin:100% 0;">0.00 GBP</div>
<div class="t" style="left:1975.3px;top:1429.7px;font-size:21px;color:#222222;font-weight:400;letter-spacing:0.00px;transform:scaleX(0.8986);transform-origin:100% 0;">0.00 GBP</div>
</div></div>
</body></html>
